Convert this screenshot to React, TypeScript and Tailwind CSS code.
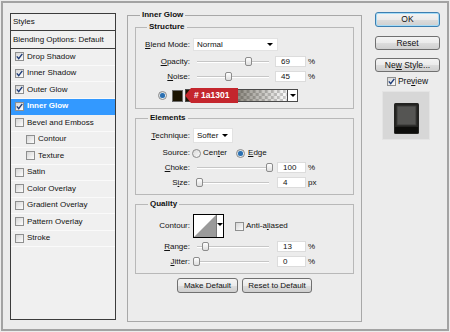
import React from "react";

const FONT = "[font-family:'Liberation_Sans',Arial,sans-serif]";

function Check({ checked }: { checked?: boolean }) {
  return (
    <span className="w-[9px] h-[9px] border border-[#8e8f8f] bg-[linear-gradient(135deg,#d6d6d6,#fdfdfd)] flex items-center justify-center shrink-0">
      {checked && (
        <svg width="7" height="7" viewBox="0 0 7 7">
          <path d="M0.8 3.4 L2.7 5.6 L6.3 0.9" fill="none" stroke="#1d3b78" strokeWidth="1.4" />
        </svg>
      )}
    </span>
  );
}

function Radio({ on }: { on?: boolean }) {
  return (
    <span className="w-[9px] h-[9px] rounded-full border border-[#8a8a8a] bg-[linear-gradient(135deg,#d8d8d8,#fafafa)] flex items-center justify-center shrink-0">
      {on && <span className="w-[5px] h-[5px] rounded-full bg-[#2b6fb0] shadow-[0_0_1px_#7fc0f0]" />}
    </span>
  );
}

function Tri() {
  return <span className="w-0 h-0 border-l-[3px] border-r-[3px] border-t-[3px] border-l-transparent border-r-transparent border-t-black" />;
}

function Slider({ thumb }: { thumb: number }) {
  return (
    <div className="relative ml-[7px] w-[72px] h-full flex items-center shrink-0">
      <div className="w-full h-[2px] bg-[#c6c6c6] border-b border-white" />
      <div
        className="absolute top-[1px] w-[7px] h-[9px] rounded-[2px] border border-[#8c8c8c] bg-[linear-gradient(#ffffff,#dedede)]"
        style={{ left: thumb - 3.5 }}
      />
    </div>
  );
}

function Input({ value, w }: { value: string; w: string }) {
  return (
    <div className={`${w} h-full bg-white border border-[#dcdcdc] pl-[5px] flex items-center leading-none`}>{value}</div>
  );
}

function Label({ children }: { children: React.ReactNode }) {
  return <div className="w-[54px] text-right shrink-0 leading-none">{children}</div>;
}

function SliderRow({
  label,
  thumb,
  value,
  unit,
  mt,
  inputMl,
  inputW,
}: {
  label: React.ReactNode;
  thumb: number;
  value: string;
  unit: string;
  mt: string;
  inputMl: string;
  inputW: string;
}) {
  return (
    <div className={`flex items-center h-[11px] ${mt}`}>
      <Label>{label}</Label>
      <Slider thumb={thumb} />
      <div className={`${inputMl} h-full flex items-center`}>
        <Input value={value} w={inputW} />
      </div>
      <span className="ml-[2px] leading-none">{unit}</span>
    </div>
  );
}

const listRows = [
  { label: "Drop Shadow", checked: true },
  { label: "Inner Shadow", checked: true },
  { label: "Outer Glow", checked: true },
  { label: "Inner Glow", checked: true, active: true },
  { label: "Bevel and Emboss" },
  { label: "Contour", indent: true },
  { label: "Texture", indent: true },
  { label: "Satin" },
  { label: "Color Overlay" },
  { label: "Gradient Overlay" },
  { label: "Pattern Overlay" },
  { label: "Stroke" },
];

function Btn({ children, w, h, def }: { children: React.ReactNode; w: string; h: string; def?: boolean }) {
  return (
    <div
      className={`${w} ${h} rounded-[3px] border ${
        def ? "border-[#3c7fb1] shadow-[inset_0_0_0_1px_#a6dcf7]" : "border-[#707070]"
      } bg-[linear-gradient(#f4f4f4,#ebebeb_50%,#dddddd_51%,#cfcfcf)] flex items-center justify-center`}
    >
      <span className="leading-none whitespace-pre">{children}</span>
    </div>
  );
}

export default function App() {
  return (
    <div className={`w-[450px] h-[332px] bg-[#ececec] p-[1px] text-[8px] text-[#111] ${FONT}`}>
      <div className="w-full h-full border-2 border-[#a3a3a3] flex items-start">
        {/* Left list */}
        <div className="mt-[10px] ml-[7px] w-[106px] h-[307px] border border-[#3c3c3c] bg-[#f0f0f0] flex flex-col shrink-0">
          <div className="h-[17px] border-b border-[#3c3c3c] pl-[2px] flex items-center">Styles</div>
          <div className="h-[18px] border-b border-[#3c3c3c] pl-[2px] flex items-center">Blending Options: Default</div>
          {listRows.map((r) => (
            <div
              key={r.label}
              className={`h-[16.5px] flex items-center gap-[3px] border-b ${
                r.active ? "bg-[#3399ff] text-white font-bold border-[#3399ff]" : "border-[#fafafa]"
              } ${r.indent ? "pl-[15px]" : "pl-[4px]"}`}
            >
              <Check checked={r.checked} />
              <span>{r.label}</span>
            </div>
          ))}
        </div>

        {/* Main panel */}
        <fieldset className="mt-[7px] ml-[11px] w-[235px] h-[312px] border border-[#a8a8a8] shrink-0">
          <legend className="ml-[12px] px-[2px] font-bold leading-[10px]">Inner Glow</legend>

          {/* Structure */}
          <fieldset className="mt-[2px] ml-[7px] w-[219px] h-[87px] border border-[#b8b8b8]">
            <legend className="ml-[11px] px-[2px] font-bold leading-[10px]">Structure</legend>
            <div className="flex items-center h-[13px] mt-[6px]">
              <Label>
                <u>B</u>lend Mode:
              </Label>
              <div className="ml-[3px] w-[85px] h-full bg-white border border-[#e2e2e2] flex items-center justify-between pl-[3px] pr-[4px]">
                <span className="leading-none">Normal</span>
                <Tri />
              </div>
            </div>
            <SliderRow
              label={
                <>
                  <u>O</u>pacity:
                </>
              }
              thumb={51}
              value="69"
              unit="%"
              mt="mt-[5px]"
              inputMl="ml-[6px]"
              inputW="w-[31px]"
            />
            <SliderRow
              label={
                <>
                  <u>N</u>oise:
                </>
              }
              thumb={31}
              value="45"
              unit="%"
              mt="mt-[4px]"
              inputMl="ml-[6px]"
              inputW="w-[31px]"
            />
            <div className="flex items-center h-[13px] mt-[7px]">
              <div className="ml-[22px]">
                <Radio on />
              </div>
              <div className="ml-[5px] w-[11px] h-[12px] bg-[#1a1301] border border-[#6a6a6a]" />
              <div className="relative ml-[2px] w-[113px] h-[13px] border border-[#4a4a4a] flex">
                <svg className="flex-1 h-full" viewBox="0 0 100 11" preserveAspectRatio="none">
                  <defs>
                    <pattern id="chk" width="6" height="6" patternUnits="userSpaceOnUse">
                      <rect width="6" height="6" fill="#ffffff" />
                      <rect width="3" height="3" fill="#cccccc" />
                      <rect x="3" y="3" width="3" height="3" fill="#cccccc" />
                    </pattern>
                    <linearGradient id="gr" x1="0" x2="1" y1="0" y2="0">
                      <stop offset="0" stopColor="#1a1301" stopOpacity="1" />
                      <stop offset="1" stopColor="#1a1301" stopOpacity="0" />
                    </linearGradient>
                  </defs>
                  <rect width="100" height="11" fill="url(#chk)" />
                  <rect width="100" height="11" fill="url(#gr)" />
                </svg>
                <div className="w-[10px] h-full bg-white border-l border-[#4a4a4a] flex items-center justify-center">
                  <Tri />
                </div>
                <div className="absolute left-[-1px] top-[-2px] w-[53px] h-[15px] bg-[#c4262d] [clip-path:polygon(6px_0,100%_0,100%_100%,6px_100%,0_50%)] text-white font-bold text-[8.5px] flex items-center pl-[9px] leading-none">
                  # 1a1301
                </div>
              </div>
            </div>
          </fieldset>

          {/* Elements */}
          <fieldset className="mt-[4px] ml-[7px] w-[219px] h-[82px] border border-[#b8b8b8]">
            <legend className="ml-[12px] px-[2px] font-bold leading-[10px]">Elements</legend>
            <div className="flex items-center h-[15px] mt-[5px]">
              <Label>
                <u>T</u>echnique:
              </Label>
              <div className="ml-[3px] w-[40px] h-full bg-white border border-[#e2e2e2] flex items-center justify-between pl-[3px] pr-[4px]">
                <span className="leading-none">Softer</span>
                <Tri />
              </div>
            </div>
            <div className="flex items-center h-[10px] mt-[5px]">
              <Label>Source:</Label>
              <div className="ml-[2px]">
                <Radio />
              </div>
              <span className="ml-[2px] leading-none">
                Cen<u>t</u>er
              </span>
              <div className="ml-[9px]">
                <Radio on />
              </div>
              <span className="ml-[3px] leading-none">
                <u>E</u>dge
              </span>
            </div>
            <SliderRow
              label={
                <>
                  <u>C</u>hoke:
                </>
              }
              thumb={72}
              value="100"
              unit="%"
              mt="mt-[4px]"
              inputMl="ml-[8px]"
              inputW="w-[29px]"
            />
            <SliderRow
              label={
                <>
                  S<u>i</u>ze:
                </>
              }
              thumb={2}
              value="4"
              unit="px"
              mt="mt-[4px]"
              inputMl="ml-[8px]"
              inputW="w-[29px]"
            />
          </fieldset>

          {/* Quality */}
          <fieldset className="mt-[4px] ml-[7px] w-[219px] h-[75px] border border-[#b8b8b8]">
            <legend className="ml-[12px] px-[2px] font-bold leading-[10px]">Quality</legend>
            <div className="flex items-center h-[24px] mt-[5px]">
              <Label>Contour:</Label>
              <div className="ml-[3px] w-[31px] h-full border border-black bg-white flex">
                <svg width="22" height="22" viewBox="0 0 22 22" className="shrink-0">
                  <rect width="22" height="22" fill="#ffffff" />
                  <polygon points="0,22 22,0 22,22" fill="#9a9a9a" />
                </svg>
                <div className="flex-1 border-l border-[#777] flex justify-center pt-[8px]">
                  <Tri />
                </div>
              </div>
              <div className="ml-[11px]">
                <Check />
              </div>
              <span className="ml-[2px] leading-none">
                Anti-a<u>l</u>iased
              </span>
            </div>
            <SliderRow
              label={
                <>
                  <u>R</u>ange:
                </>
              }
              thumb={8}
              value="13"
              unit="%"
              mt="mt-[3px]"
              inputMl="ml-[8px]"
              inputW="w-[29px]"
            />
            <SliderRow
              label={
                <>
                  <u>J</u>itter:
                </>
              }
              thumb={-1}
              value="0"
              unit="%"
              mt="mt-[4px]"
              inputMl="ml-[8px]"
              inputW="w-[29px]"
            />
          </fieldset>

          <div className="flex mt-[4px] ml-[49px] gap-[4px]">
            <Btn w="w-[61px]" h="h-[15px]">
              Make Default
            </Btn>
            <Btn w="w-[70px]" h="h-[15px]">
              Reset to Default
            </Btn>
          </div>
        </fieldset>

        {/* Right column */}
        <div className="mt-[9px] ml-[13px] w-[65px] flex flex-col text-[8.5px] shrink-0">
          <Btn w="w-full" h="h-[15px]" def>
            OK
          </Btn>
          <div className="mt-[9px]">
            <Btn w="w-full" h="h-[14px]">
              Reset
            </Btn>
          </div>
          <div className="mt-[8px]">
            <Btn w="w-full" h="h-[14px]">
              <>
                Ne<u>w</u>{" "}Style...
              </>
            </Btn>
          </div>
          <div className="mt-[4px] h-[10px] flex items-center justify-center gap-[2px]">
            <Check checked />
            <span className="leading-none">
              Pre<u>v</u>iew
            </span>
          </div>
          <div className="mt-[5px] ml-[7px] w-[48px] h-[49px] bg-[#d7d7d7] border border-[#e4e4e4] flex justify-center pt-[11px]">
            <svg width="25" height="31" viewBox="0 0 25 31">
              <rect x="0" y="0" width="25" height="31" rx="1.5" fill="#232321" />
              <rect x="3" y="3" width="19" height="19" fill="#555553" stroke="#3b3b39" strokeWidth="1" />
              <rect x="1" y="24" width="23" height="6" fill="#0d0d0b" />
            </svg>
          </div>
        </div>
      </div>
    </div>
  );
}
